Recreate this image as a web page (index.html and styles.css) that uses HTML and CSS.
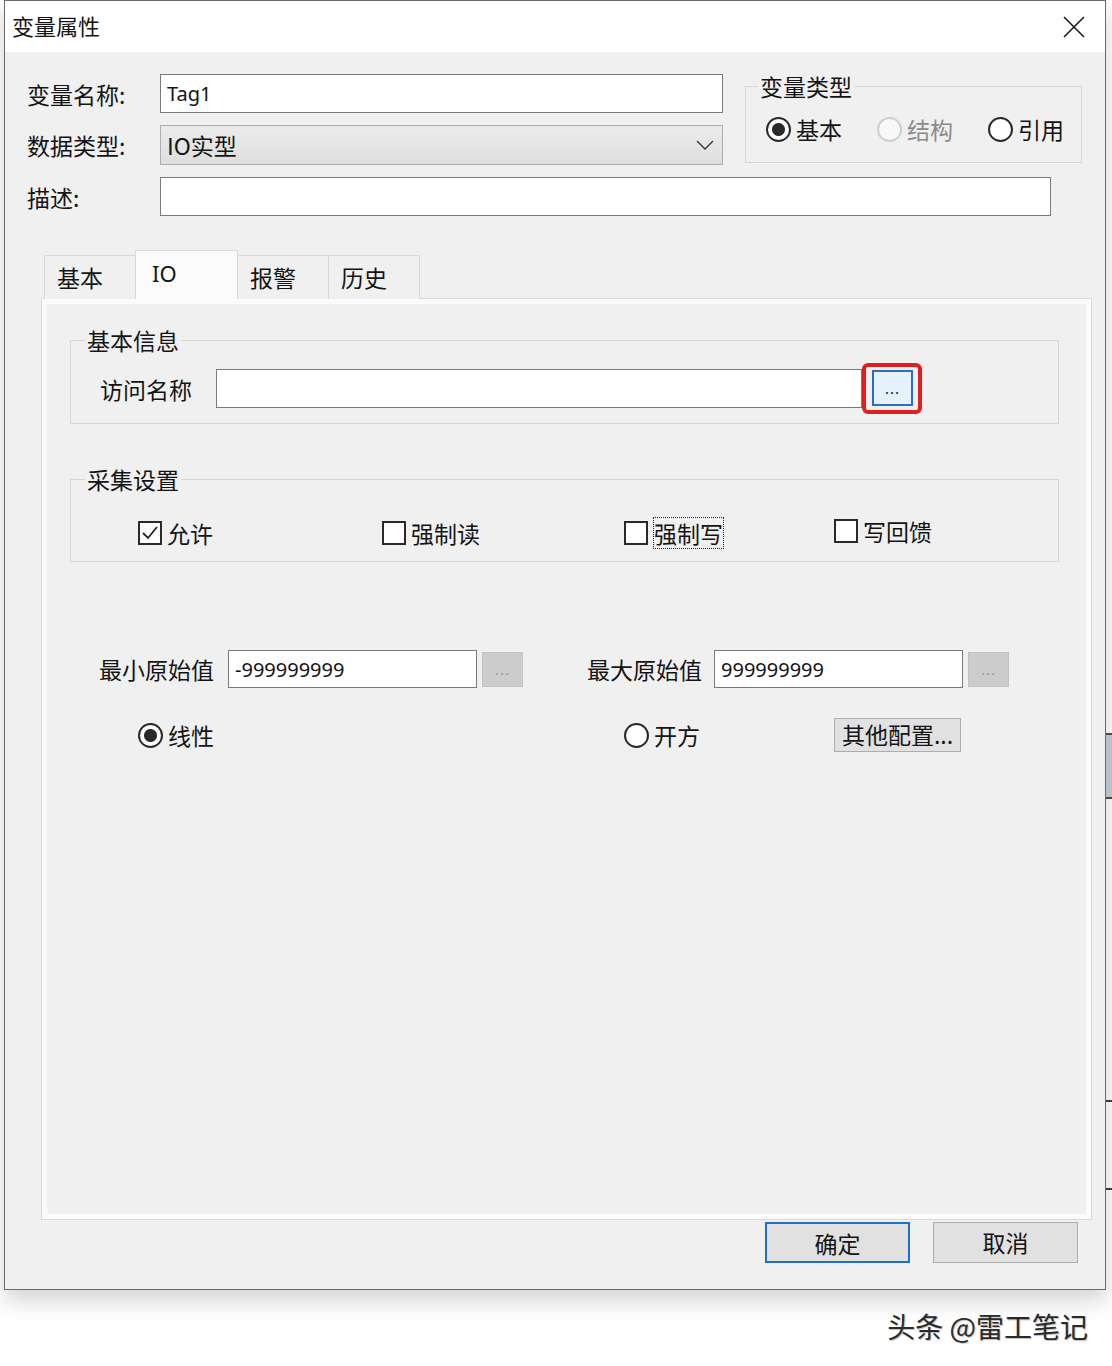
FILE: index.html
```html
<!DOCTYPE html>
<html lang="zh-CN">
<head>
    <meta charset="UTF-8">
    <meta name="viewport" content="width=device-width, initial-scale=1.0">

    <link rel="stylesheet" href="styles.css">

    <title>变量属性</title>
</head>
<body>

    <div class="pagina">
        <div class="janela">

            <div class="titulo">
                <span>变量属性</span>
                <svg class="fechar" width="24" height="24" viewBox="0 0 24 24">
                    <path d="M2 2 L22 22 M22 2 L2 22" stroke="#1a1a1a" stroke-width="1.6" fill="none"/>
                </svg>
            </div>

            <div class="conteudo">

                <div class="topo">
                    <label class="rotulo">变量名称:</label>
                    <div class="campo texto">Tag1</div>

                    <fieldset class="grupo tipo">
                        <legend>变量类型</legend>
                        <div class="opcoes">
                            <span class="opcao"><span class="radio marcado"></span>基本</span>
                            <span class="opcao desativado"><span class="radio"></span>结构</span>
                            <span class="opcao"><span class="radio"></span>引用</span>
                        </div>
                    </fieldset>

                    <label class="rotulo">数据类型:</label>
                    <div class="lista">
                        <span>IO实型</span>
                        <svg width="18" height="10" viewBox="0 0 18 10">
                            <path d="M1 1 L9 9 L17 1" stroke="#333" stroke-width="1.3" fill="none"/>
                        </svg>
                    </div>

                    <label class="rotulo">描述:</label>
                    <div class="campo largo"></div>
                </div>

                <div class="abas">
                    <div class="aba">基本</div>
                    <div class="aba ativa">IO</div>
                    <div class="aba">报警</div>
                    <div class="aba">历史</div>
                </div>

                <div class="painel">

                    <fieldset class="grupo info">
                        <legend>基本信息</legend>
                        <div class="linha">
                            <label class="rotulo acesso">访问名称</label>
                            <div class="campo acesso-campo"></div>
                            <span class="destaque">
                                <span class="botao-pontos ativo">...</span>
                            </span>
                        </div>
                    </fieldset>

                    <fieldset class="grupo coleta">
                        <legend>采集设置</legend>
                        <div class="marcas">
                            <span class="opcao">
                                <span class="caixa">
                                    <svg width="20" height="20" viewBox="0 0 20 20">
                                        <path d="M3 10 L8 15 L17 4" stroke="#222" stroke-width="1.8" fill="none"/>
                                    </svg>
                                </span>允许
                            </span>
                            <span class="opcao"><span class="caixa"></span>强制读</span>
                            <span class="opcao"><span class="caixa"></span><span class="foco">强制写</span></span>
                            <span class="opcao alto"><span class="caixa"></span>写回馈</span>
                        </div>
                    </fieldset>

                    <div class="limites">
                        <label class="rotulo">最小原始值</label>
                        <div class="campo num">-999999999</div>
                        <span class="botao-pontos inativo">...</span>

                        <label class="rotulo segundo">最大原始值</label>
                        <div class="campo num">999999999</div>
                        <span class="botao-pontos inativo">...</span>
                    </div>

                    <div class="modos">
                        <span class="opcao"><span class="radio marcado"></span>线性</span>
                        <span class="opcao col3"><span class="radio"></span>开方</span>
                        <span class="botao outros">其他配置...</span>
                    </div>

                </div>

                <div class="rodape">
                    <span class="botao grande padrao">确定</span>
                    <span class="botao grande">取消</span>
                </div>

            </div>
        </div>

        <div class="fundo"></div>
    </div>

    <div class="marca">头条 @雷工笔记</div>

</body>
</html>
```

FILE: styles.css
```css
* {
    box-sizing: border-box;
}
body {
    margin: 0;
    background-color: #ffffff;
    font-family: "Noto Sans CJK SC", "Noto Sans", sans-serif;
    font-size: 23px;
    color: #141414;
}

.pagina {
    display: flex;
    align-items: flex-start;
}
.janela {
    margin-left: 4px;
    width: 1102px;
    height: 1290px;
    border: 1px solid #6a6a6a;
    background-color: #f0f0f0;
    box-shadow: 0 10px 22px rgba(0, 0, 0, 0.18);
}
.fundo {
    width: 6px;
    height: 1290px;
    background: linear-gradient(to bottom,
        transparent 0 733px, #4a4a4a 733px 735px,
        #b7c2cd 735px 797px, #4a4a4a 797px 799px,
        transparent 799px 1100px, #3a3a3a 1100px 1102px,
        transparent 1102px 1188px, #3a3a3a 1188px 1190px,
        transparent 1190px);
}

.titulo {
    height: 51px;
    background-color: #ffffff;
    display: flex;
    align-items: center;
    justify-content: space-between;
    padding: 0 19px 4px 7px;
    font-size: 22px;
}
.fechar {
    margin-top: 4px;
}

.conteudo {
    padding: 22px 0 0 22px;
}

/* campos do topo */
.topo {
    display: grid;
    grid-template-columns: 111px 563px 337px;
    grid-template-rows: 39px 40px 39px;
    column-gap: 22px;
    row-gap: 12px;
}
.rotulo {
    align-self: center;
    line-height: 30px;
    white-space: nowrap;
}
.campo {
    height: 39px;
    border: 1px solid #7a7a7a;
    background-color: #ffffff;
    padding-left: 6px;
    font-family: "Noto Sans", sans-serif;
    font-size: 20px;
    line-height: 37px;
}
.largo {
    grid-column: 2 / span 2;
    width: 891px;
}
.lista {
    display: flex;
    align-items: center;
    justify-content: space-between;
    border: 1px solid #adadad;
    background: linear-gradient(#ebebeb, #dedede);
    padding: 0 8px 0 6px;
    line-height: 30px;
}

/* grupos */
fieldset.grupo {
    margin: 0;
    border: 1px solid #d6d6d6;
    padding: 0 0 0 14px;
    min-width: 0;
}
legend {
    padding: 0 2px;
    line-height: 24px;
    font-size: 23px;
}
.tipo {
    grid-column: 3;
    grid-row: 1 / span 2;
    align-self: start;
    height: 89px;
}
fieldset.tipo {
    padding-left: 12px;
}
.opcoes {
    display: flex;
    margin: 15px 0 0 8px;
}
.opcoes .opcao {
    flex: none;
    width: 111px;
}

.opcao {
    display: flex;
    align-items: center;
    gap: 5px;
    line-height: 32px;
    white-space: nowrap;
}
.radio {
    flex: none;
    width: 25px;
    height: 25px;
    border: 2px solid #2a2a2a;
    border-radius: 50%;
    background-color: #ffffff;
}
.radio.marcado {
    background: radial-gradient(circle, #2a2a2a 0 6px, #ffffff 7px);
}
.desativado {
    color: #8a8a8a;
}
.desativado .radio {
    border-color: #cfcfcf;
    background-color: #f8f8f8;
}
.caixa {
    flex: none;
    width: 24px;
    height: 24px;
    border: 2px solid #2a2a2a;
    background-color: #ffffff;
    display: flex;
    align-items: center;
    justify-content: center;
}
.foco {
    border: 1px dotted #222;
    line-height: 30px;
}

/* abas */
.abas {
    display: flex;
    align-items: flex-end;
    height: 49px;
    margin: 34px 0 -1px 17px;
    position: relative;
}
.aba {
    width: 92px;
    height: 44px;
    padding-left: 12px;
    border: 1px solid #d9d9d9;
    border-bottom: none;
    background-color: #f0f0f0;
    line-height: 42px;
}
.aba + .aba {
    margin-left: -1px;
}
.aba.ativa {
    width: 103px;
    height: 49px;
    padding-left: 16px;
    background-color: #fbfbfb;
    line-height: 44px;
    font-family: "Noto Sans", sans-serif;
    font-size: 22px;
}

.painel {
    margin-left: 14px;
    width: 1051px;
    height: 922px;
    border: 1px solid #d9d9d9;
    background-color: #f0f0f0;
    box-shadow: inset 0 0 0 5px #fbfbfb;
    padding: 0 32px 0 28px;
}

.info {
    margin-top: 29px !important;
}
.linha {
    display: flex;
    align-items: center;
    margin: 11px 0 9px 15px;
}
.acesso {
    margin-right: 24px;
}
.acesso-campo {
    width: 646px;
}
.destaque {
    display: flex;
    border: 4px solid #e0201c;
    border-radius: 6px;
    padding: 3px 5px 4px 6px;
}
.botao-pontos {
    display: flex;
    align-items: center;
    justify-content: center;
    width: 41px;
    height: 36px;
    font-family: "Noto Sans", sans-serif;
    font-size: 15px;
    letter-spacing: 1px;
    line-height: 20px;
}
.botao-pontos.ativo {
    background-color: #e5f1fb;
    border: 2px solid #2b6fc4;
    color: #111;
}
.botao-pontos.inativo {
    height: 35px;
    margin-left: 5px;
    background-color: #cccccc;
    border: 1px solid #c2c2c2;
    color: #9a9a9a;
}

.coleta {
    margin-top: 43px !important;
}
.marcas {
    display: grid;
    grid-template-columns: 244px 242px 210px auto;
    margin: 26px 0 12px 53px;
}
.alto {
    margin-top: -4px;
}

.limites {
    display: flex;
    align-items: center;
    margin: 88px 0 0 29px;
    height: 38px;
}
.limites .rotulo {
    margin-right: 14px;
}
.limites .segundo {
    margin-left: 64px;
    margin-right: 12px;
}
.num {
    width: 249px;
    height: 38px;
}

.modos {
    display: grid;
    grid-template-columns: 244px 242px 210px auto;
    align-items: center;
    margin: 30px 0 0 68px;
    height: 34px;
}
.col3 {
    grid-column: 3;
}

.botao {
    display: inline-block;
    background-color: #e1e1e1;
    border: 1px solid #adadad;
    text-align: center;
}
.outros {
    width: 127px;
    height: 34px;
    line-height: 31px;
    padding: 0 2px;
    white-space: nowrap;
}

.rodape {
    display: flex;
    justify-content: flex-end;
    gap: 23px;
    margin-top: 2px;
    padding-right: 27px;
}
.grande {
    width: 145px;
    height: 41px;
    line-height: 38px;
}
.padrao {
    border: 2px solid #1f6fd0;
}

.marca {
    margin-top: 18px;
    padding-right: 24px;
    text-align: right;
    font-size: 28px;
    line-height: 36px;
    color: #2a2a2a;
    text-shadow: 1px 1px 1px rgba(0, 0, 0, 0.25);
}
```
